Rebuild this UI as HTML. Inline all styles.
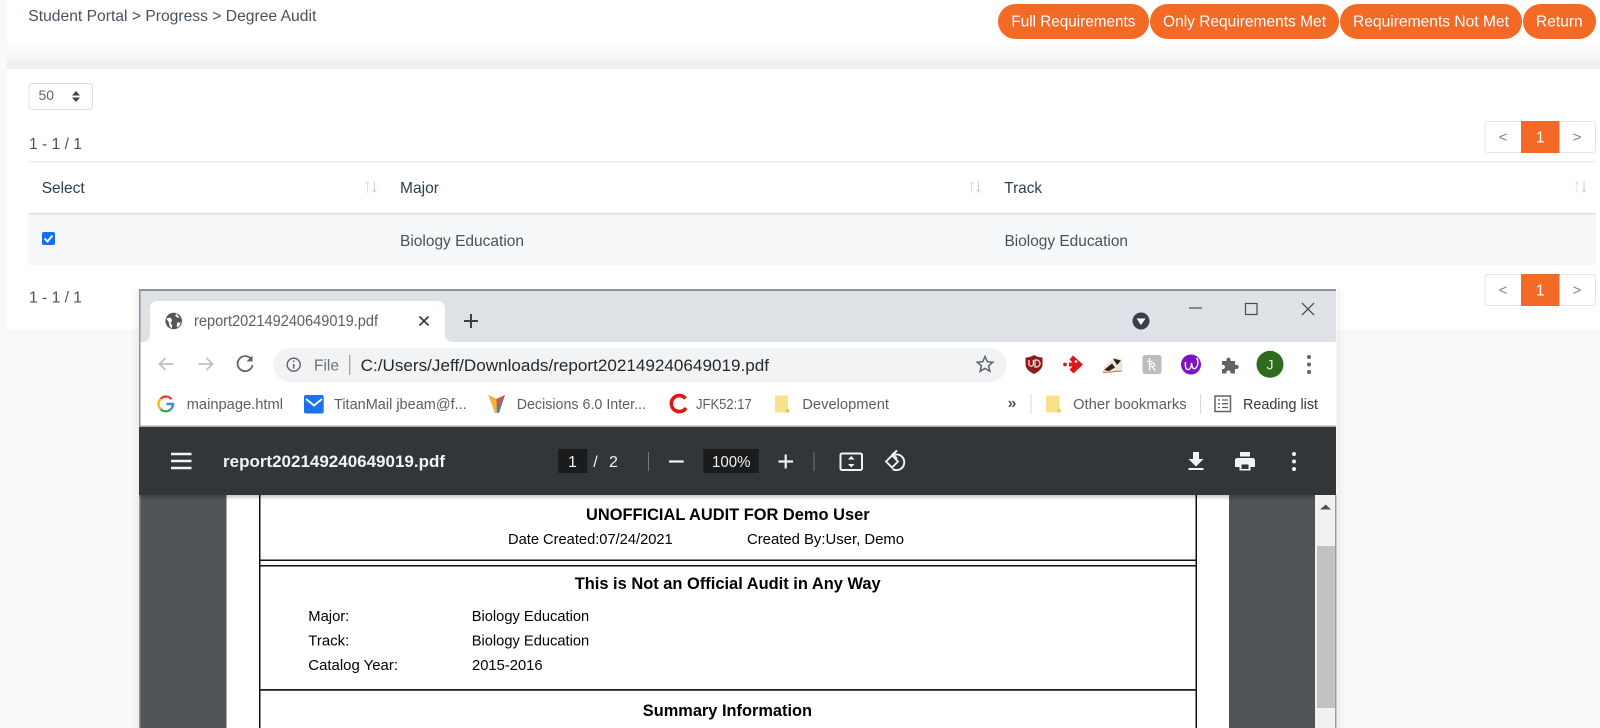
<!DOCTYPE html>
<html><head><meta charset="utf-8"><title>Degree Audit</title>
<style>
html,body{margin:0;padding:0;width:1600px;height:728px;overflow:hidden;background:#f9f9f9}
svg{display:block}
text{font-family:"Liberation Sans",sans-serif}
.n{fill:#46525e;font-size:16px}
.b{fill:#fff;font-size:16px}
.c{fill:#5b5f64;font-size:15px}
.d{fill:#000;font-size:15px}
.db{fill:#000;font-size:17px;font-weight:bold}
</style></head><body>
<svg width="1600" height="728" viewBox="0 0 1600 728" xmlns="http://www.w3.org/2000/svg">
<defs>
<linearGradient id="g1" x1="0" y1="0" x2="0" y2="1"><stop offset="0" stop-color="#fff"/><stop offset="1" stop-color="#f6f6f6"/></linearGradient>
<linearGradient id="sh" x1="0" y1="0" x2="0" y2="1"><stop offset="0" stop-color="#000" stop-opacity=".22"/><stop offset="1" stop-color="#000" stop-opacity="0"/></linearGradient>
<linearGradient id="shr" x1="0" y1="0" x2="1" y2="0"><stop offset="0" stop-color="#000" stop-opacity=".05"/><stop offset="1" stop-color="#000" stop-opacity="0"/></linearGradient>
<linearGradient id="shl" x1="1" y1="0" x2="0" y2="0"><stop offset="0" stop-color="#000" stop-opacity=".05"/><stop offset="1" stop-color="#000" stop-opacity="0"/></linearGradient>
</defs>
<rect width="1600" height="728" fill="#f9f9f9"/>
<rect x="7" y="0" width="1593" height="40" fill="#fff"/>
<rect x="7" y="40" width="1593" height="21" fill="url(#g1)"/>
<rect x="7" y="61" width="1593" height="8" fill="#eeeeee"/>
<rect x="7" y="69" width="1593" height="261" fill="#fff"/>

<text class="n" x="28.3" y="21" textLength="288" lengthAdjust="spacingAndGlyphs">Student Portal &gt; Progress &gt; Degree Audit</text>

<g fill="#f26a25">
<rect x="998" y="4" width="151" height="35" rx="17.5"/>
<rect x="1150" y="4" width="189" height="35" rx="17.5"/>
<rect x="1340" y="4" width="182" height="35" rx="17.5"/>
<rect x="1523" y="4" width="73" height="35" rx="17.5"/>
</g>
<text class="b" x="1011.4" y="26.7" textLength="124" lengthAdjust="spacingAndGlyphs">Full Requirements</text>
<text class="b" x="1163" y="26.7" textLength="163" lengthAdjust="spacingAndGlyphs">Only Requirements Met</text>
<text class="b" x="1353" y="26.7" textLength="156" lengthAdjust="spacingAndGlyphs">Requirements Not Met</text>
<text class="b" x="1536" y="26.7" textLength="46.7" lengthAdjust="spacingAndGlyphs">Return</text>

<rect x="29" y="83.500" width="63.500" height="26" rx="3" fill="#fff" stroke="#dcdfe3"/>
<text x="38.500" y="100" fill="#5b6670" font-size="14" textLength="15.500" lengthAdjust="spacingAndGlyphs">50</text>
<path d="M72 95.500L76 91L80 95.500ZM72 97.500L76 102L80 97.500Z" fill="#3c4650"/>

<text class="n" x="29" y="149" textLength="53" lengthAdjust="spacingAndGlyphs">1 - 1 / 1</text>
<text class="n" x="29" y="302.700" textLength="53" lengthAdjust="spacingAndGlyphs">1 - 1 / 1</text>

<rect x="1485" y="121.500" width="110.500" height="31" rx="3" fill="#fff" stroke="#e2e4e7"/>
<rect x="1521" y="121" width="38.500" height="32" fill="#f26a25"/>
<text x="1503" y="142" fill="#7b838b" font-size="15" text-anchor="middle">&lt;</text>
<text x="1540.200" y="142.500" fill="#fff" font-size="16" text-anchor="middle">1</text>
<text x="1577" y="142" fill="#7b838b" font-size="15" text-anchor="middle">&gt;</text>
<rect x="1485" y="274.500" width="110.500" height="31" rx="3" fill="#fff" stroke="#e2e4e7"/>
<rect x="1521" y="274" width="38.500" height="32" fill="#f26a25"/>
<text x="1503" y="295" fill="#7b838b" font-size="15" text-anchor="middle">&lt;</text>
<text x="1540.200" y="295.500" fill="#fff" font-size="16" text-anchor="middle">1</text>
<text x="1577" y="295" fill="#7b838b" font-size="15" text-anchor="middle">&gt;</text>

<rect x="28.500" y="161" width="1567.500" height="1.500" fill="#eaecef"/>
<text x="41.700" y="193" fill="#2f3d49" font-size="16" textLength="43" lengthAdjust="spacingAndGlyphs">Select</text>
<text x="400" y="193" fill="#2f3d49" font-size="16" textLength="39" lengthAdjust="spacingAndGlyphs">Major</text>
<text x="1004.300" y="193" fill="#2f3d49" font-size="16" textLength="37.700" lengthAdjust="spacingAndGlyphs">Track</text>
<g fill="none" stroke="#dde0e3" stroke-width="1">
<path d="M367.500 193V182M365.500 184.500L367.500 182L369.500 184.500"/><path d="M374.500 181V192M372.500 189.500L374.500 192L376.500 189.500" stroke="#cbced2"/>
<path d="M971.500 193V182M969.500 184.500L971.500 182L973.500 184.500"/><path d="M978.500 181V192M976.500 189.500L978.500 192L980.500 189.500" stroke="#cbced2"/>
<path d="M1577 193V182M1575 184.500L1577 182L1579 184.500"/><path d="M1584 181V192M1582 189.500L1584 192L1586 189.500" stroke="#cbced2"/>
</g>
<rect x="28.500" y="215" width="1567.500" height="50" fill="#f7f8fa"/>
<rect x="28.500" y="212.700" width="1567.500" height="2.300" fill="#e2e5e9"/>
<rect x="42" y="232" width="13" height="13" rx="2" fill="#0f6ffa"/>
<path d="M44.500 238.500L47.500 241.500L52.500 235.500" fill="none" stroke="#fff" stroke-width="2"/>
<text class="n" x="400" y="246" textLength="124" lengthAdjust="spacingAndGlyphs">Biology Education</text>
<text class="n" x="1004.500" y="246" textLength="123.500" lengthAdjust="spacingAndGlyphs">Biology Education</text>

<rect x="1337" y="289" width="8" height="439" fill="url(#shr)"/>
<rect x="131" y="289" width="8" height="439" fill="url(#shl)"/>

<rect x="139" y="289" width="1197" height="439" fill="#fff"/>
<rect x="139" y="289" width="1197" height="53" fill="#dee1e6"/>
<rect x="139" y="289" width="1197" height="2" fill="#8f9296"/>
<path d="M142 342C147 342 150 339 150 335V309Q150 301 158 301H437Q445 301 445 309V335C445 339 448 342 453 342Z" fill="#fff"/>
<g transform="translate(173.700,321)">
<circle r="8.300" fill="#54585d"/>
<path d="M-7.500 -2.500L-3.500 -3.500L-1.500 -1L-3 2L-1.500 4.500L-2 7.500L-4 5.500L-5 1ZM2.500 -7.500L1.500 -5L3.500 -3.500L6 -3.500ZM3.500 1.500L7 1.500L5.500 5L3.500 6.500L3 4Z" fill="#fff"/>
</g>
<text class="c" x="194" y="326" textLength="184" lengthAdjust="spacingAndGlyphs" style="font-size:15.500px">report202149240649019.pdf</text>
<path d="M419.500 316.500L428.500 325.500M428.500 316.500L419.500 325.500" stroke="#3c4043" stroke-width="1.800" fill="none"/>
<path d="M471 314V328M464 321H478" stroke="#3c4043" stroke-width="2" fill="none"/>
<circle cx="1141" cy="321" r="8.500" fill="#3c4046"/>
<path d="M1136.500 318.500H1145.500L1141 325Z" fill="#fff"/>
<path d="M1189 308H1202" stroke="#55585c" stroke-width="1.300"/>
<rect x="1245.500" y="303.500" width="11.500" height="11" fill="none" stroke="#45484c" stroke-width="1.200"/>
<path d="M1302 303L1314 315M1314 303L1302 315" stroke="#3c3f43" stroke-width="1.200"/>

<path d="M173.500 364H160M165.500 358L159.500 364L165.500 370" fill="none" stroke="#bcc0c4" stroke-width="1.800"/>
<path d="M198.500 364H212M206.500 358L212.500 364L206.500 370" fill="none" stroke="#bcc0c4" stroke-width="1.800"/>
<path d="M251 359A7.500 7.500 0 1 0 252.500 365" fill="none" stroke="#5f6368" stroke-width="1.800"/>
<path d="M252.500 355.500V361.500H246.500Z" fill="#5f6368"/>
<rect x="273" y="348" width="733.700" height="34" rx="17" fill="#f1f3f4"/>
<circle cx="293.700" cy="364.700" r="6.500" fill="none" stroke="#5f6368" stroke-width="1.400"/>
<path d="M293.700 364V368.500M293.700 360.500V362" stroke="#5f6368" stroke-width="1.500"/>
<text x="314" y="370.700" fill="#6d7175" font-size="16" textLength="25" lengthAdjust="spacingAndGlyphs">File</text>
<rect x="349.300" y="355" width="1" height="20" fill="#85898d"/>
<text x="360.700" y="371" fill="#26292c" font-size="17" textLength="408.300" lengthAdjust="spacingAndGlyphs">C:/Users/Jeff/Downloads/report202149240649019.pdf</text>
<path d="M985 356.500L987.300 361.700L992.800 362.200L988.600 365.900L989.900 371.300L985 368.400L980.100 371.300L981.400 365.900L977.200 362.200L982.700 361.700Z" fill="none" stroke="#5f6368" stroke-width="1.500"/>

<path d="M1025.500 357.500Q1030 357.500 1034 355Q1038 357.500 1042.500 357.500V364Q1042.500 370 1034 374Q1025.500 370 1025.500 364Z" fill="#8e1a1a"/>
<path d="M1029 360V364A2.200 2.200 0 0 0 1033.400 364V360M1035 360V367H1036.500A3.500 3.500 0 0 0 1036.500 360Z" fill="none" stroke="#f6e3e3" stroke-width="1.300"/>
<path d="M1073 355.500L1083 364.500L1073.500 373.500L1069.500 369.500L1072.500 366.500H1069V362.500H1072.500L1069.500 359.500Z" fill="#d9161a"/>
<circle cx="1065" cy="364.500" r="1.900" fill="#d9161a"/>
<circle cx="1076" cy="361.500" r="1.300" fill="#fff"/>
<path d="M1103 370C1104 365 1110 361 1116 357.500L1122 359.500C1122 364 1123.500 367 1122 370C1117 373.500 1108 373.500 1103 372Z" fill="#eee5d2"/>
<path d="M1104 370L1112 363.500L1115 367.500L1109 371ZM1113 358.500L1121 360.500L1117 365Z" fill="#26221f"/>
<path d="M1103 372.500L1122 371" stroke="#c07d3c" stroke-width="1"/>
<rect x="1142.500" y="355" width="19" height="19" rx="2.500" fill="#bdbdbd"/>
<path d="M1149.500 358V370.500M1147 361.500H1152.500M1149.500 365C1152 362.500 1155.500 363 1154.500 365.500C1153.500 367 1151.500 366.500 1151.500 366.500L1155.500 370.500" fill="none" stroke="#fff" stroke-width="1.300"/>
<circle cx="1191" cy="364.500" r="10" fill="#7d14c4"/>
<path d="M1185.500 362C1185 367 1186 370 1188.500 369.500C1191 369 1191.500 365 1191.500 363C1192 367 1193 369.500 1195 368.500C1198 367 1199 361 1196.500 358" fill="none" stroke="#fff" stroke-width="1.400"/>
<path d="M1222 361H1226.500C1225.500 356.500 1231.500 356.500 1230.500 361H1235V365C1240 364 1240 370 1235 369V373.500H1230.500C1231.500 369.500 1225.500 369.500 1226.500 373.500H1222V369C1226 370 1226 364 1222 365Z" fill="#5f6368"/>
<circle cx="1270" cy="364.300" r="13.500" fill="#2e6b1e"/>
<text x="1270" y="369.500" fill="#e8efe3" font-size="14" text-anchor="middle">J</text>
<g fill="#5f6368"><circle cx="1309" cy="357" r="2"/><circle cx="1309" cy="364.500" r="2"/><circle cx="1309" cy="372" r="2"/></g>

<g fill="none" stroke-width="2.400">
<path d="M171.500 399.300A7 7 0 0 0 160.600 399" stroke="#ea4335"/>
<path d="M160.600 399A7 7 0 0 0 160.600 409" stroke="#fbbc05"/>
<path d="M160.600 409A7 7 0 0 0 171 409" stroke="#34a853"/>
<path d="M171 409A7 7 0 0 0 173 404H166.500" stroke="#4285f4"/>
</g>
<text class="c" x="186.700" y="408.800" textLength="96.300" lengthAdjust="spacingAndGlyphs">mainpage.html</text>
<rect x="304" y="395" width="19.700" height="18.500" rx="2" fill="#1a73f0"/>
<path d="M306 399L314 405.500L322 399" fill="none" stroke="#fff" stroke-width="1.800"/>
<text class="c" x="334" y="408.800" textLength="132.700" lengthAdjust="spacingAndGlyphs">TitanMail jbeam@f...</text>
<path d="M488.500 395L496.500 399L505 395L499 413L495 413Z" fill="#3d7fd4"/>
<path d="M488.500 395L496.500 399L497 413L495 413Z" fill="#f2b233"/>
<path d="M496.500 399L505 395L498 408Z" fill="#d9562c"/>
<text class="c" x="516.700" y="408.800" textLength="129.300" lengthAdjust="spacingAndGlyphs">Decisions 6.0 Inter...</text>
<path d="M685.500 398.500A8 8 0 1 0 686 408" fill="none" stroke="#e3150f" stroke-width="3.600"/>
<text class="c" x="696" y="408.800" textLength="55.700" lengthAdjust="spacingAndGlyphs">JFK52:17</text>
<path d="M775 395.500H788V412.500H775Z" fill="#fbe08a"/>
<path d="M786 409H789.300V412.500H786Z" fill="#f0c555"/>
<text class="c" x="802.300" y="408.800" textLength="86.700" lengthAdjust="spacingAndGlyphs">Development</text>
<text x="1012" y="408" fill="#55585c" font-size="16" font-weight="bold" text-anchor="middle">»</text>
<rect x="1030.500" y="394" width="1" height="20" fill="#d6d8da"/>
<path d="M1046 395.500H1059.500V412.500H1046Z" fill="#fbe08a"/>
<path d="M1057.500 409H1060.700V412.500H1057.500Z" fill="#f0c555"/>
<text class="c" x="1073" y="408.800" textLength="113.700" lengthAdjust="spacingAndGlyphs">Other bookmarks</text>
<rect x="1200" y="394" width="1" height="20" fill="#d6d8da"/>
<rect x="1215" y="396" width="15.500" height="15.500" fill="none" stroke="#5f6368" stroke-width="1.500"/>
<path d="M1218 400H1220M1222 400H1228M1218 403.700H1220M1222 403.700H1228M1218 407.500H1220M1222 407.500H1228" stroke="#5f6368" stroke-width="1.300"/>
<text x="1243" y="408.800" fill="#34373a" font-size="15" textLength="75" lengthAdjust="spacingAndGlyphs">Reading list</text>
<rect x="139" y="425.500" width="1197" height="1.500" fill="#a4a7aa"/>

<rect x="139" y="427" width="1197" height="301" fill="#505457"/>
<rect x="1315" y="495" width="21" height="233" fill="#f1f1f1"/>
<rect x="1317" y="546" width="18" height="162" fill="#c1c1c1"/>
<path d="M1320 509.500L1325.800 504.500L1331 509.500Z" fill="#505050"/>
<rect x="1335" y="495" width="1.500" height="233" fill="#9a9c9e"/>
<rect x="139" y="289" width="1.500" height="439" fill="#8f9296"/>

<rect x="226.500" y="495" width="1002.500" height="233" fill="#fff"/>
<rect x="139" y="495" width="1176" height="5" fill="url(#sh)"/>
<rect x="139" y="427" width="1197" height="68" fill="#323639"/>
<path d="M171 454H191.500M171 461H191.500M171 468H191.500" stroke="#f1f3f4" stroke-width="2.600"/>
<text x="223" y="467" fill="#f1f3f4" font-size="17" font-weight="bold" textLength="222" lengthAdjust="spacingAndGlyphs">report202149240649019.pdf</text>
<rect x="558.300" y="449" width="29" height="24" fill="#191b1c"/>
<text x="572.500" y="467" fill="#f1f3f4" font-size="16" text-anchor="middle">1</text>
<text x="595.500" y="467" fill="#f1f3f4" font-size="16" text-anchor="middle">/</text>
<text x="613.500" y="467" fill="#f1f3f4" font-size="16" text-anchor="middle">2</text>
<rect x="648" y="452" width="1" height="19" fill="#74777a"/>
<path d="M669 461.500H683.700" stroke="#f1f3f4" stroke-width="2.200"/>
<rect x="703.300" y="449" width="55.400" height="24" fill="#191b1c"/>
<text x="712" y="467" fill="#f1f3f4" font-size="16" textLength="38.500" lengthAdjust="spacingAndGlyphs">100%</text>
<path d="M778.500 461.500H793M785.700 454.500V468.500" stroke="#f1f3f4" stroke-width="2.200"/>
<rect x="813.500" y="452" width="1" height="19" fill="#74777a"/>
<rect x="840.500" y="453.500" width="21.500" height="16.500" rx="1.500" fill="none" stroke="#f1f3f4" stroke-width="2"/>
<path d="M848 459.500L851.300 456L854.500 459.500ZM848 464L851.300 467.500L854.500 464Z" fill="#f1f3f4"/>
<path d="M886 461.500L892 455.500L898 461.500L892 467.500Z" fill="none" stroke="#f1f3f4" stroke-width="1.900"/>
<path d="M893 454.500H896A7.800 7.800 0 1 1 892.500 469" fill="none" stroke="#f1f3f4" stroke-width="1.900"/>
<path d="M897 450.500L892.500 454.500L897 458.500" fill="none" stroke="#f1f3f4" stroke-width="1.900"/>
<path d="M1193 452H1199V459H1203.500L1196 466.500L1188.500 459H1193Z" fill="#f1f3f4"/>
<rect x="1188.500" y="468" width="15" height="2" fill="#f1f3f4"/>
<path d="M1240 452H1250V456.500H1240ZM1237.500 458H1252.500Q1255 458 1255 460.500V467H1250.500V470.500H1239.500V467H1235V460.500Q1235 458 1237.500 458Z" fill="#f1f3f4"/>
<rect x="1241.500" y="464.500" width="7" height="4.500" fill="#323639"/>
<g fill="#f1f3f4"><circle cx="1294" cy="454" r="2"/><circle cx="1294" cy="461.500" r="2"/><circle cx="1294" cy="469" r="2"/></g>

<rect x="259" y="495" width="1.500" height="233" fill="#111"/>
<rect x="1195.500" y="495" width="1.500" height="233" fill="#111"/>
<rect x="259" y="559.500" width="938" height="1.500" fill="#111"/>
<rect x="259" y="565" width="938" height="1.500" fill="#111"/>
<rect x="259" y="689" width="938" height="1.800" fill="#222"/>
<text class="db" x="586" y="520" textLength="283.600" lengthAdjust="spacingAndGlyphs">UNOFFICIAL AUDIT FOR Demo User</text>
<text class="d" x="508" y="544" textLength="164.700" lengthAdjust="spacingAndGlyphs">Date Created:07/24/2021</text>
<text class="d" x="747" y="544" textLength="157" lengthAdjust="spacingAndGlyphs">Created By:User, Demo</text>
<text class="db" x="574.700" y="589" textLength="306" lengthAdjust="spacingAndGlyphs">This is Not an Official Audit in Any Way</text>
<text class="d" x="308.300" y="621" textLength="41" lengthAdjust="spacingAndGlyphs">Major:</text>
<text class="d" x="471.700" y="621" textLength="117.500" lengthAdjust="spacingAndGlyphs">Biology Education</text>
<text class="d" x="308.300" y="645.700" textLength="41" lengthAdjust="spacingAndGlyphs">Track:</text>
<text class="d" x="471.700" y="645.700" textLength="117.500" lengthAdjust="spacingAndGlyphs">Biology Education</text>
<text class="d" x="308.300" y="670" textLength="89.700" lengthAdjust="spacingAndGlyphs">Catalog Year:</text>
<text class="d" x="472" y="670" textLength="70.600" lengthAdjust="spacingAndGlyphs">2015-2016</text>
<text class="db" x="642.800" y="716" textLength="169.200" lengthAdjust="spacingAndGlyphs">Summary Information</text>
</svg>
</body></html>
